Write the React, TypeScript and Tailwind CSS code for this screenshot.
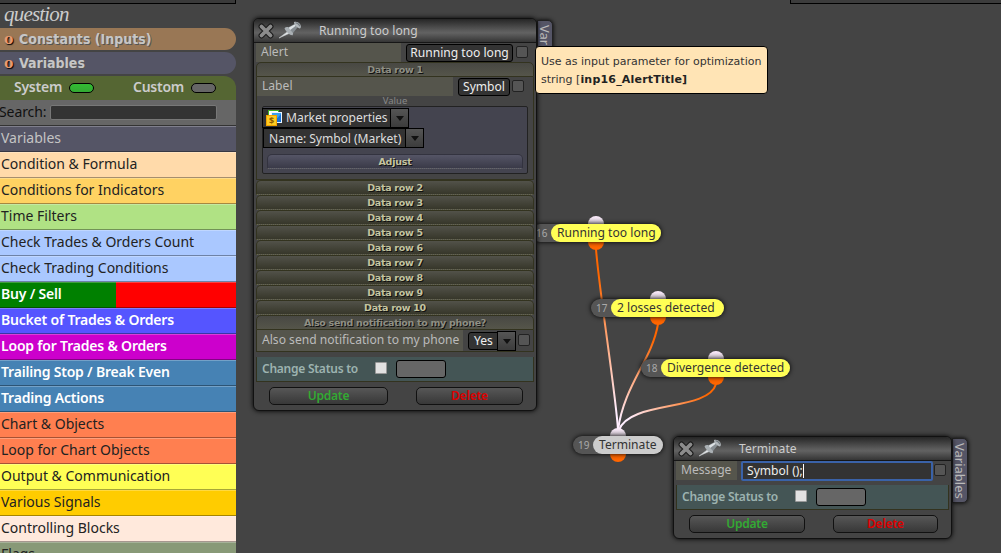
import type { ReactNode } from "react";
import clsx from "clsx";

const categories = [
  { label: "Variables", className: "bg-[#555566] text-[#c4c4c4]" },
  { label: "Condition & Formula", className: "bg-[#ffdaaa] text-[#222]" },
  { label: "Conditions for Indicators", className: "bg-[#ffd262] text-[#222]" },
  { label: "Time Filters", className: "bg-[#b0e284] text-[#222]" },
  { label: "Check Trades & Orders Count", className: "bg-[#aac8ff] text-[#222]" },
  { label: "Check Trading Conditions", className: "bg-[#aac8ff] text-[#222]" },
  {
    label: "Buy / Sell",
    className:
      "bg-[linear-gradient(90deg,#008000_116px,#ff0000_116px)] text-white font-semibold tracking-[-0.2px]",
  },
  {
    label: "Bucket of Trades & Orders",
    className: "bg-[#5555ff] text-white font-semibold tracking-[-0.2px]",
  },
  {
    label: "Loop for Trades & Orders",
    className: "bg-[#cc00cc] text-white font-semibold tracking-[-0.2px]",
  },
  {
    label: "Trailing Stop / Break Even",
    className: "bg-[#4682b4] text-white font-semibold tracking-[-0.2px]",
  },
  {
    label: "Trading Actions",
    className: "bg-[#4682b4] text-white font-semibold tracking-[-0.2px]",
  },
  { label: "Chart & Objects", className: "bg-[#ff7f50] text-[#222]" },
  { label: "Loop for Chart Objects", className: "bg-[#ff7f50] text-[#222]" },
  { label: "Output & Communication", className: "bg-[#ffff55] text-[#222]" },
  { label: "Various Signals", className: "bg-[#ffcc00] text-[#222]" },
  { label: "Controlling Blocks", className: "bg-[#ffe9dc] text-[#222]" },
  { label: "Flags", className: "bg-[#889977] text-[#222]" },
];

const dataRows = [2, 3, 4, 5, 6, 7, 8, 9, 10];

const nodes = [
  { id: 16, label: "Running too long", box: "left-[531px] top-[224px]", width: "w-[110px]", dot: "left-[57px]" },
  { id: 17, label: "2 losses detected", box: "left-[591px] top-[299px]", width: "w-[113px]", dot: "left-[59px]" },
  { id: 18, label: "Divergence detected", box: "left-[641px] top-[359px]", width: "w-[129px]", dot: "left-[67px]" },
  { id: 19, label: "Terminate", box: "left-[573px] top-[436px]", width: "w-[70px]", dot: "left-[37px]" },
];

function CloseIcon() {
  return (
    <svg width="16" height="16" viewBox="0 0 16 16" className="shrink-0">
      <path d="M3.5 3.5 L12.5 12.5 M12.5 3.5 L3.5 12.5" stroke="#1c1c1c" strokeWidth="6" strokeLinecap="round" />
      <path d="M3.5 3.5 L12.5 12.5 M12.5 3.5 L3.5 12.5" stroke="#8c8c8c" strokeWidth="3.8" strokeLinecap="round" />
    </svg>
  );
}

function PinIcon() {
  return (
    <svg width="24" height="18" viewBox="0 0 24 18" className="shrink-0">
      <path d="M1 17 L10.5 10 L12 12 Z" fill="#e4e8ea" stroke="#c4c8ca" strokeWidth="0.6" />
      <path d="M6.5 7.2 C8 5.4 10.5 5.6 12.5 7.6 C15 10 15.8 12.8 14.6 14.2 C12.6 14.6 7.6 10.8 6.5 7.2 Z" fill="#aab0b4" />
      <path d="M10 6.5 L16.5 3 L19.5 6.5 L15 12 Z" fill="#868d92" />
      <path d="M10.6 6.8 L16.6 3.4 L17.8 4.8 L12.2 9 Z" fill="#dde2e5" />
      <path d="M16 1 C18 0.2 20 1 21.5 2.6 C23 4.4 23.4 6.4 22 7.4 C20 7.6 16 4.4 16 1 Z" fill="#b3b9bd" />
      <path d="M17.5 1.8 C19 1.6 21.2 3.4 21.8 5.2" stroke="#747b80" strokeWidth="1.3" fill="none" />
    </svg>
  );
}

function MarketIcon() {
  return (
    <svg width="16" height="16" viewBox="0 0 16 16" className="shrink-0">
      <rect x="2.5" y="0.5" width="10" height="9" fill="#fff" stroke="#3fae22" />
      <rect x="5.5" y="2.5" width="10" height="10" fill="#39a0f0" stroke="#e8f4ff" />
      <path d="M8 12 L15 4 V12 Z" fill="#1672d8" />
      <rect x="0.5" y="5.5" width="10" height="10" fill="#ffcc22" stroke="#f2a200" />
      <text x="5.5" y="13.6" fontSize="9" fontWeight="700" textAnchor="middle" fill="#8a5a00">$</text>
    </svg>
  );
}

function Checkbox({ className }: { className?: string }) {
  return (
    <span
      className={clsx("h-3 w-3 shrink-0 rounded-[2px] border border-[#222] bg-[#555]", className)}
    />
  );
}

function SelectArrow() {
  return (
    <span className="-ml-px flex h-5 w-[19px] shrink-0 items-center justify-center border border-black bg-linear-to-b from-[#555] to-[#3c3c3c]">
      <svg width="8" height="5" viewBox="0 0 8 5">
        <path d="M0 0 H8 L4 5 Z" fill="#111" />
      </svg>
    </span>
  );
}

function SectionBar({ children, open }: { children: ReactNode; open?: boolean }) {
  return (
    <div
      className={clsx(
        "h-[15px] rounded-t-[5px] border border-[#33331f] text-center font-['DejaVu_Sans'] text-[9.5px] leading-[14px] font-bold tracking-[-0.3px] [text-shadow:1px_1px_0_#111]",
        open
          ? "bg-linear-to-b from-[#484843] to-[#55554a] text-[#8f8f84]"
          : "border-b-[#66664e] [border-bottom-style:dotted] bg-linear-to-b from-[#52524a] to-[#37372a] text-[#c4c4a0]"
      )}
    >
      {children}
    </div>
  );
}

function PanelHeader({ title }: { title: string }) {
  return (
    <div className="flex h-6 items-center rounded-t-[5px] border-b border-[#161616] bg-[linear-gradient(#262626,#5a5a5a_50%,#626262_60%,#353535)] pl-1">
      <CloseIcon />
      <span className="ml-1 -mt-0.5">
        <PinIcon />
      </span>
      <span className="ml-[17px] pt-0.5 text-[12.1px] text-[#ccc]">{title}</span>
    </div>
  );
}

function StatusRow() {
  return (
    <div className="flex h-[25px] items-center border border-t-0 border-[#33331f] bg-[#445555] pl-[5px]">
      <span className="w-[113px] text-[12px] font-semibold tracking-[-0.25px] text-[#9db3b0]">
        Change Status to
      </span>
      <span className="-mt-0.5 h-3 w-3 rounded-[1px] border border-[#999] bg-[#e2e2e2]" />
      <span className="ml-[9px] h-[18px] w-[50px] rounded-[3px] border border-black bg-[#666]" />
    </div>
  );
}

function PanelButton({ children, className }: { children: ReactNode; className: string }) {
  return (
    <button
      type="button"
      className={clsx(
        "h-[18px] rounded-[5px] border border-[#111] bg-linear-to-b from-[#575757] to-[#383838] text-[12px] leading-4 font-semibold tracking-[-0.2px]",
        className
      )}
    >
      {children}
    </button>
  );
}

function GroupHeading({ children, className }: { children: ReactNode; className: string }) {
  return (
    <div
      className={clsx(
        "mb-0.5 flex h-[22px] shrink-0 items-center rounded-r-full pl-1 font-['DejaVu_Sans_Condensed'] text-[14px] font-bold text-[#c6c6c6] [text-shadow:1px_1px_0_#555]",
        className
      )}
    >
      <span className="mr-[5px] w-[10px] font-['DejaVu_Serif'] text-[14px] text-[#e89a70] [text-shadow:1px_1px_1px_#000]">
        o
      </span>
      {children}
    </div>
  );
}

function Sidebar() {
  return (
    <aside className="flex h-[553px] w-[236px] flex-col overflow-hidden">
      <div className="h-1 shrink-0 border-r border-b border-black bg-[#3a3a3a]" />
      <div className="h-6 shrink-0 pl-1 font-['Liberation_Serif'] text-[21px] leading-[20px] tracking-[-0.8px] text-[#ccc] italic">
        question
      </div>
      <GroupHeading className="bg-[#997755]">Constants (Inputs)</GroupHeading>
      <GroupHeading className="bg-[#555566]">Variables</GroupHeading>
      <div className="flex h-6 shrink-0 items-center rounded-tr-[12px] bg-[#556633] pl-[14px] text-[14px] leading-[22px] font-semibold tracking-[-0.25px] text-[#ccc]">
        <span className="-mt-0.5 w-[55px]">System</span>
        <span className="h-[10px] w-[25px] rounded-[5px] border border-black bg-linear-to-b from-[#33bb33] to-[#33aa33]" />
        <span className="-mt-0.5 ml-[39px] w-[58px]">Custom</span>
        <span className="h-[10px] w-[25px] rounded-[5px] border border-black bg-[#666]" />
      </div>
      <div className="flex h-[26px] shrink-0 items-center border-b border-[#333] bg-[#666] text-[14px] text-[#111]">
        <span className="-mt-0.5 -ml-px w-[51px] tracking-[-0.1px]">Search:</span>
        <span className="h-[15px] w-[167px] rounded-[2px] border border-[#777] bg-[#333]" />
      </div>
      {categories.map((category) => (
        <div
          key={category.label}
          className={clsx(
            "h-[26px] shrink-0 pl-px text-[14px] leading-[24px] shadow-[inset_0_1px_0_rgba(255,255,255,.25),inset_0_-1px_0_rgba(0,0,0,.35)]",
            category.className
          )}
        >
          {category.label}
        </div>
      ))}
    </aside>
  );
}

function AlertPanel() {
  return (
    <section className="absolute top-[18px] left-[253px] h-[393px] w-[284px] rounded-[6px] border border-[#111] bg-[#444] shadow-[0_0_5px_#000]">
      <PanelHeader title="Running too long" />
      <div className="flex h-[19px] pl-0.5 text-[12.1px] text-[#bbb]">
        <span className="w-[145px] bg-[#55554c] pl-[5px] leading-[17px]">Alert</span>
        <span className="ml-[5px] mt-px h-[18px] w-[107px] rounded-[3px] border border-black bg-[#333] text-center leading-4 whitespace-nowrap text-[#eee]">
          Running too long
        </span>
        <Checkbox className="mt-[3px] ml-[3px]" />
      </div>
      <div className="px-0.5">
        <SectionBar open>Data row 1</SectionBar>
        <div className="h-[103px] border border-t-0 border-[#33331f]">
          <div className="flex h-[19px] text-[12.1px] text-[#bbb]">
            <span className="w-[196px] bg-[#55554c] pl-[5px] leading-[17px]">Label</span>
            <span className="ml-[5px] mt-px h-[18px] w-[52px] rounded-[3px] border border-black bg-[#333] text-center leading-4 text-[#eee]">
              Symbol
            </span>
            <Checkbox className="mt-[3px] ml-[2px]" />
          </div>
          <div className="h-[10px] text-center text-[9.5px] leading-[10px] text-[#888]">Value</div>
          <div className="mx-[5px] h-[68px] rounded-[2px] border border-[#222] bg-[#44444f] pt-px text-[12.1px] text-[#ddd]">
            <div className="-ml-px flex">
              <span className="flex h-5 w-[129px] items-center gap-1 border border-black bg-[#333] pl-[3px] leading-4 tracking-[-0.05px] whitespace-nowrap">
                <MarketIcon />
                Market properties
              </span>
              <SelectArrow />
            </div>
            <div className="flex">
              <span className="h-5 w-[143px] border border-black bg-[#333] pl-[5px] leading-[19px] tracking-[-0.05px] whitespace-nowrap">
                Name: Symbol (Market)
              </span>
              <SelectArrow />
            </div>
            <div className="mx-1 mt-[6px] h-[15px] rounded-t-[5px] border border-[#33333f] border-b-[#666] bg-linear-to-b from-[#555566] to-[#3a3a48] text-center font-['DejaVu_Sans'] text-[9.5px] leading-[14px] font-bold tracking-[-0.2px] text-[#c4c4a0] [border-bottom-style:dotted] [text-shadow:1px_1px_0_#111]">
              Adjust
            </div>
          </div>
        </div>
        {dataRows.map((row) => (
          <SectionBar key={row}>Data row {row}</SectionBar>
        ))}
        <SectionBar open>Also send notification to my phone?</SectionBar>
        <div className="flex h-[22px] border border-t-0 border-[#33331f] text-[12.1px] text-[#bbb]">
          <span className="w-[206px] bg-[#55554c] pl-[5px] leading-[19px] whitespace-nowrap">
            Also send notification to my phone
          </span>
          <span className="ml-[5px] mt-0.5 h-[18px] w-[30px] rounded-l-[3px] border border-black bg-[#333] pl-[5px] leading-4 text-[#eee]">
            Yes
          </span>
          <span className="mt-px flex">
            <SelectArrow />
          </span>
          <Checkbox className="mt-1 ml-[2px]" />
        </div>
        <div className="mt-[5px]">
          <StatusRow />
        </div>
        <div className="mt-[5px] flex gap-7 pl-[13px]">
          <PanelButton className="w-[119px] text-[#33aa33]">Update</PanelButton>
          <PanelButton className="w-[107px] text-[#dd0000]">Delete</PanelButton>
        </div>
      </div>
    </section>
  );
}

function TerminatePanel() {
  return (
    <section className="absolute top-[436px] left-[673px] h-[103px] w-[279px] rounded-[6px] border border-[#111] bg-[#444] shadow-[0_0_5px_#000]">
      <PanelHeader title="Terminate" />
      <div className="flex h-6 pl-0.5 text-[12.1px] text-[#bbb]">
        <span className="h-[19px] w-[61px] bg-[#55554c] pl-[5px] leading-[17px]">Message</span>
        <span className="ml-1 flex h-5 w-[192px] items-center rounded-[2px] border-2 border-[#3a62a8] bg-[#333] pl-1 text-[#eee]">
          Symbol ();
          <span className="h-[14px] w-px bg-white" />
        </span>
        <Checkbox className="mt-[3px] ml-px" />
      </div>
      <div className="px-0.5">
        <StatusRow />
        <div className="mt-[5px] flex gap-7 pl-[13px]">
          <PanelButton className="w-[116px] text-[#33aa33]">Update</PanelButton>
          <PanelButton className="w-[105px] text-[#dd0000]">Delete</PanelButton>
        </div>
      </div>
    </section>
  );
}

function VariablesTab({ className }: { className: string }) {
  return (
    <div
      className={clsx(
        "absolute h-[65px] w-[16px] rounded-r-[5px] border border-[#222] bg-[#555566] pt-[4px] text-[13px] leading-[14px] text-[#bbb] shadow-[0_0_4px_#000] [writing-mode:vertical-rl]",
        className
      )}
    >
      Variables
    </div>
  );
}

function Wires() {
  return (
    <svg className="absolute inset-0" width="1001" height="553" fill="none" strokeWidth="2">
      <defs>
        <linearGradient id="wire-16" gradientUnits="userSpaceOnUse" x1="0" y1="249" x2="0" y2="430">
          <stop offset="0.15" stopColor="#ff6600" />
          <stop offset="0.9" stopColor="#ffeeff" />
        </linearGradient>
        <linearGradient id="wire-17" gradientUnits="userSpaceOnUse" x1="0" y1="324" x2="0" y2="430">
          <stop offset="0.15" stopColor="#ff6600" />
          <stop offset="0.9" stopColor="#ffeeff" />
        </linearGradient>
        <linearGradient id="wire-18" gradientUnits="userSpaceOnUse" x1="716" y1="0" x2="618" y2="0">
          <stop offset="0.1" stopColor="#ff6600" />
          <stop offset="0.9" stopColor="#ffeeff" />
        </linearGradient>
      </defs>
      <path d="M596 249 C599 290 616 395 618 430" stroke="url(#wire-16)" />
      <path d="M658 324 C652 360 624 385 618 430" stroke="url(#wire-17)" />
      <path d="M716 384 C708 412 630 400 619 430" stroke="url(#wire-18)" />
    </svg>
  );
}

export default function App() {
  return (
    <main className="relative h-[553px] w-[1001px] overflow-hidden bg-[#444] font-['Noto_Sans',sans-serif]">
      <Sidebar />
      <div className="absolute top-0 left-[790px] h-1 w-[211px] border-b border-l border-black bg-[#3c3c3c]" />
      <Wires />

      {nodes.map((node) => (
        <div key={node.id} className={clsx("absolute", node.box)}>
          <span className={clsx("absolute -top-2 h-4 w-4 rounded-full bg-linear-to-b from-[#ffeeff] to-[#999]", node.dot)} />
          <span className={clsx("absolute top-[10px] h-4 w-4 rounded-full bg-[#ff6600]", node.dot)} />
          <div className="relative flex h-[18px] items-center rounded-full bg-[#555] shadow-[0_0_5px_#000]">
            <span className="w-5 pl-[5px] text-[10px] text-[#aaa]">{node.id}</span>
            <span
              className={clsx(
                "h-[18px] rounded-full pl-[6px] text-[12.1px] leading-[17px] whitespace-nowrap text-[#333]",
                node.width,
                node.id === 19 ? "bg-[#ccc]" : "bg-[#ffff55]"
              )}
            >
              {node.label}
            </span>
          </div>
        </div>
      ))}

      <VariablesTab className="top-[20px] left-[537px]" />
      <AlertPanel />
      <VariablesTab className="top-[438px] left-[952px]" />
      <TerminatePanel />

      <div className="absolute top-[46px] left-[535px] h-12 w-[233px] rounded-[4px] border border-black bg-[#ffe4b5] pt-[6px] pl-[5px] font-['DejaVu_Sans'] text-[11px] leading-[18px] whitespace-nowrap text-[#333]">
        Use as input parameter for optimization
        <br />
        string [<b className="tracking-[0.2px] text-[#222]">inp16_AlertTitle]</b>
      </div>
    </main>
  );
}
